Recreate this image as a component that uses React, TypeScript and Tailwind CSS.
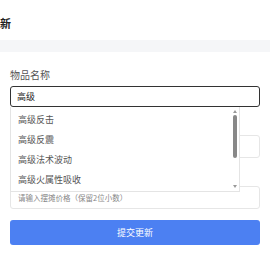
import { useState } from "react";

const options = ["高级反击", "高级反震", "高级法术波动", "高级火属性吸收"];

export default function App() {
  const [name, setName] = useState("高级");

  return (
    <div
      className="w-[270px] h-[270px] overflow-hidden bg-white text-[#333]"
      style={{ fontFamily: '"Noto Sans CJK SC", "Noto Sans", sans-serif' }}
    >
      <div className="h-[40px] flex items-center pt-[6px] -ml-[11px]">
        <h2 className="text-[11px] font-bold text-[#222]">更新</h2>
      </div>
      <div className="h-[12px] bg-[#f5f6f8]" />

      <div className="px-[10px] pt-[16px]">
        <label className="block text-[10px] leading-[14px] text-[#555] mb-[4px]">物品名称</label>
        <div className="relative">
          <div className="h-[21px] rounded-[3px] border border-[#333] flex items-center px-[6px]">
            <input
              value={name}
              onChange={(e) => setName(e.target.value)}
              className="w-full text-[9px] outline-none bg-transparent text-[#222]"
            />
          </div>

          {/* autocomplete list */}
          <div className="absolute left-0 top-[21px] w-[230px] h-[85px] bg-white border border-[#e4e4e4] border-t-0 z-10 flex">
            <ul className="flex-1 pt-[3px]">
              {options.map((o) => (
                <li key={o} className="h-[20px] flex items-center px-[7px] text-[9px] text-[#555]">
                  {o}
                </li>
              ))}
            </ul>
            <div className="w-[7px] mr-[1px] flex flex-col items-center pt-[3px] pb-[3px]">
              <div className="w-0 h-0 border-l-[2px] border-r-[2px] border-b-[3px] border-l-transparent border-r-transparent border-b-[#999]" />
              <div className="w-[4px] h-[43px] mt-[2px] rounded-full bg-[#888]" />
              <div className="flex-1" />
              <div className="w-0 h-0 border-l-[2px] border-r-[2px] border-t-[3px] border-l-transparent border-r-transparent border-t-[#999]" />
            </div>
          </div>
        </div>

        <div className="mt-[28px] h-[23px] rounded-[3px] border border-[#e6e6e6]" />

        <div className="mt-[28px] h-[23px] rounded-[3px] border border-[#e6e6e6] flex items-center px-[7px]">
          <span className="text-[7.5px] text-[#888]">请输入摆摊价格（保留2位小数）</span>
        </div>

        <button className="mt-[11px] w-full h-[25px] rounded-[3px] bg-[#4c80f2] text-white text-[9px]">
          提交更新
        </button>
      </div>
    </div>
  );
}
